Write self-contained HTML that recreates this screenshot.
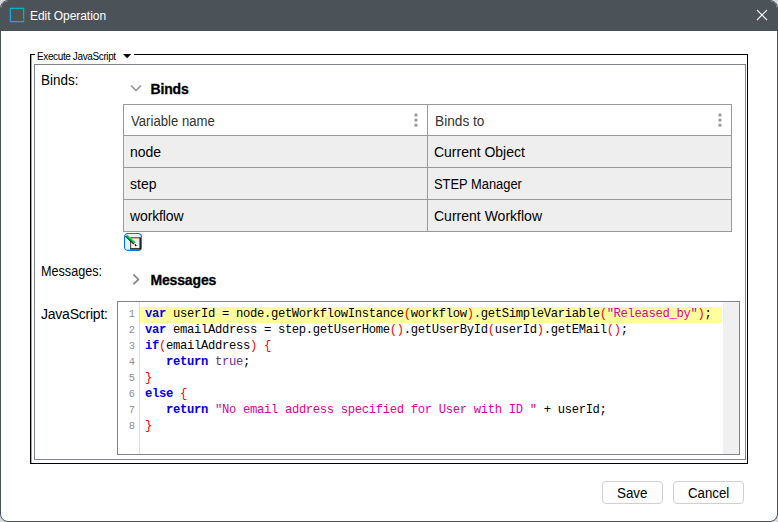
<!DOCTYPE html>
<html><head><meta charset="utf-8"><title>Edit Operation</title>
<style>
*{box-sizing:border-box;margin:0;padding:0}
html,body{width:778px;height:522px;overflow:hidden;background:#d5d8dc;font-family:"Liberation Sans",sans-serif;font-size:14px;color:#000}
.abs{position:absolute}
#win{position:absolute;left:0;top:0;width:778px;height:522px;border-radius:8px;background:#fff;border:1px solid #4b5359;overflow:hidden}
#win>*{margin:-1px 0 0 -1px}
#title{position:absolute;left:0;top:0;width:778px;height:31px;background:#4b5359}
#title .ico{position:absolute;left:10px;top:8px;width:14px;height:14px;border:1px solid #08b2cf;box-shadow:0 0 0 .25px #08b2cf}
.t{position:absolute;white-space:nowrap;line-height:16px;height:16px;transform-origin:0 50%}
#fs{position:absolute;left:30px;top:54px;width:718px;height:410px;border:1px solid #000;box-shadow:inset 1px 0 0 rgba(0,0,0,.35)}
#legend{position:absolute;left:35px;top:50px;height:12px;width:99px;background:#fff}
#inner{position:absolute;left:34px;top:64px;width:712px;height:396px;border:1px solid #7f848c}
.b{font-weight:bold;-webkit-text-stroke:0.3px #000}
table{position:absolute;left:123px;top:104px;border-collapse:collapse;table-layout:fixed;width:609px}
td,th{border:1px solid #999;height:32px;position:relative}
tr:first-child th{height:31px}
td{background:#eee}
th{background:#fff}
.dots{position:absolute;right:8px;top:7px;fill:#9c9c9c}
.dots i{display:block;width:3px;height:3px;border-radius:50%;background:#7a7a7a;margin-bottom:2px}
#code{position:absolute;left:117px;top:301px;width:623px;height:154px;border:1px solid #7f848c;background:#fff;overflow:hidden}
#code>*{margin:-1px 0 0 -1px}
#gsep{position:absolute;left:22px;top:1px;width:1px;height:152px;background:#ddd}
.ln{position:absolute;left:0;margin-top:-2px !important;width:18px;text-align:right;font-family:"Liberation Mono",monospace;font-size:11.8px;line-height:16px;color:#8e8e8e;transform:scaleX(.88);transform-origin:100% 50%}
.cl{position:absolute;left:28px;margin-top:-2px !important;font-family:"Liberation Mono",monospace;font-size:12.2px;letter-spacing:-0.32px;line-height:16px;white-space:pre;color:#000}
.k{color:#0000f0;font-weight:bold}.p{color:#f00}.s{color:#dc00a2}.c{color:#7030a0}
#hl{position:absolute;left:23px;top:6px;width:582px;height:16px;background:#ffff9e}
#sb{position:absolute;left:606px;top:1px;width:16px;height:152px;background:#f0f0f0}
.btn{position:absolute;top:481px;height:23px;border:1px solid #d0d0d0;border-radius:4px;background:#fdfdfd}
/*LS*/
#t_title{letter-spacing:-0.05px}
#t_binds_h{letter-spacing:-0.11px}
#t_r1a{letter-spacing:-0.01px}
#t_r1b{letter-spacing:-0.02px}
#t_r3a{letter-spacing:-0.13px}
#t_r3b{letter-spacing:0.01px}
#t_msg_h{letter-spacing:-0.14px}
#t_js_l{letter-spacing:-0.23px}
#t_h1{transform:scaleX(0.9392)}
#t_h2{transform:scaleX(0.9779)}
#t_r2b{transform:scaleX(0.9209)}
#t_save{transform:scaleX(0.9549)}
#t_binds_l{margin-left:-1.5px !important;transform:scaleX(0.9624)}
#t_r2a{transform:scaleX(1.0000)}
#t_msg_l{transform:scaleX(0.9018)}
#t_cancel{transform:scaleX(0.9475)}
/*ENDLS*/
</style></head><body>
<div id="win">
 <div id="title"><div class="ico"></div><div class="abs" style="left:23px;top:18.6px;width:1px;height:.8px;background:#4b5359"></div>
  <svg class="abs" style="left:755px;top:8px" width="14" height="14" viewBox="0 0 14 14"><path d="M2 2L12 12M12 2L2 12" stroke="#fff" stroke-width="1.1" fill="none"/></svg>
 </div>
 <div class="t" id="t_title" style="left:30px;top:8px;color:#fff;font-size:12px">Edit Operation</div>
 <div id="fs"></div>
 <div id="legend"><svg class="abs" style="left:88px;top:4px" width="9" height="5" viewBox="0 0 9 5"><path d="M-0.2 -0.2H8.4L4.1 4.3Z" fill="#000"/></svg></div>
 <div class="t" id="t_legend" style="left:37px;top:49px;font-size:10px;letter-spacing:-0.38px">Execute JavaScript</div>
 <div id="inner"></div>
 <div class="t" id="t_binds_l" style="left:41px;top:72px">Binds:</div>
 <svg class="abs" style="left:130px;top:85px" width="12" height="8" viewBox="0 0 12 8"><path d="M1.2 0.6L6 5.6L10.8 0.6" stroke="#9a9a9a" stroke-width="1.6" fill="none"/></svg>
 <div class="t b" id="t_binds_h" style="left:150.4px;top:80.5px;font-size:14px">Binds</div>
 <table>
  <tr><th style="width:304px"><svg class="dots" width="6" height="17" viewBox="0 0 6 17"><circle cx="2.95" cy="2.95" r="1.7"/><circle cx="2.95" cy="8.1" r="1.7"/><circle cx="2.95" cy="13.15" r="1.7"/></svg></th><th><svg class="dots" width="6" height="17" viewBox="0 0 6 17"><circle cx="2.95" cy="2.95" r="1.7"/><circle cx="2.95" cy="8.1" r="1.7"/><circle cx="2.95" cy="13.15" r="1.7"/></svg></th></tr>
  <tr><td></td><td></td></tr>
  <tr><td></td><td></td></tr>
  <tr><td></td><td></td></tr>
 </table>
 <div class="t" id="t_h1" style="left:131px;top:113px;color:#333">Variable name</div>
 <div class="t" id="t_h2" style="left:435px;top:113px;color:#333">Binds to</div>
 <div class="t" id="t_r1a" style="left:130px;top:144px">node</div>
 <div class="t" id="t_r1b" style="left:434px;top:144px">Current Object</div>
 <div class="t" id="t_r2a" style="left:130px;top:176px">step</div>
 <div class="t" id="t_r2b" style="left:434px;top:176px">STEP Manager</div>
 <div class="t" id="t_r3a" style="left:130px;top:208px">workflow</div>
 <div class="t" id="t_r3b" style="left:434px;top:208px">Current Workflow</div>
 <svg class="abs" style="left:123px;top:232px" width="20" height="20" viewBox="0 0 20 20">
  <defs><linearGradient id="g1" x1="1" y1="0" x2="0" y2="1"><stop offset="0" stop-color="#e4e4e4"/><stop offset="1" stop-color="#fbfbfb"/></linearGradient></defs>
  <rect x="1.55" y="1.5" width="16.8" height="16.9" rx="3.2" fill="#e5f1fb" stroke="#0078d7" stroke-width="1.1"/>
  <rect x="7.7" y="5.8" width="9.6" height="11.2" fill="url(#g1)"/><path d="M7.7 17V5.8H17.3" stroke="#3c3c3c" stroke-width="1" fill="none"/>
  <path d="M17.2 5.4V16.9H7.3" stroke="#000" stroke-width="1.3" fill="none"/>
  <path d="M2.5 4.1L10.9 12.1" stroke="#111" stroke-width="1.2"/>
  <path d="M3.6 3.6L11.9 11" stroke="#00b23a" stroke-width="2"/>
  <path d="M4.2 3.6L12.2 10.7" stroke="#4fe285" stroke-width="0.7"/>
  <path d="M10.7 12L12.7 10.4L13.2 12.4L11.9 13.3Z" fill="#fff"/>
  <path d="M11.9 12.4L13.2 14" stroke="#000" stroke-width="1.2"/>
 </svg>
 <div class="t" id="t_msg_l" style="left:41px;top:263px">Messages:</div>
 <svg class="abs" style="left:132px;top:274px" width="8" height="12" viewBox="0 0 8 12"><path d="M1.3 0.4L6.4 5.4L1.3 10.4" stroke="#858585" stroke-width="1.7" fill="none"/></svg>
 <div class="t b" id="t_msg_h" style="left:150.4px;top:271.5px;font-size:14px">Messages</div>
 <div class="t" id="t_js_l" style="left:41px;top:306px">JavaScript:</div>
 <div id="code">
  <div id="gsep"></div><div id="hl"></div><div id="sb"></div>
  <div class="ln" style="top:6px">1</div><div class="ln" style="top:22px">2</div><div class="ln" style="top:38px">3</div><div class="ln" style="top:54px">4</div><div class="ln" style="top:70px">5</div><div class="ln" style="top:86px">6</div><div class="ln" style="top:102px">7</div><div class="ln" style="top:118px">8</div>
  <div class="cl" style="top:6px"><span class="k">var</span> userId = node.getWorkflowInstance<span class="p">(</span>workflow<span class="p">)</span>.getSimpleVariable<span class="p">(</span><span class="s">"Released_by"</span><span class="p">)</span>;</div>
  <div class="cl" style="top:22px"><span class="k">var</span> emailAddress = step.getUserHome<span class="p">()</span>.getUserById<span class="p">(</span>userId<span class="p">)</span>.getEMail<span class="p">()</span>;</div>
  <div class="cl" style="top:38px"><span class="k">if</span><span class="p">(</span>emailAddress<span class="p">)</span> <span class="p">{</span></div>
  <div class="cl" style="top:54px">   <span class="k">return</span> <span class="c">true</span>;</div>
  <div class="cl" style="top:70px"><span class="p">}</span></div>
  <div class="cl" style="top:86px"><span class="k">else</span> <span class="p">{</span></div>
  <div class="cl" style="top:102px">   <span class="k">return</span> <span class="s">"No email address specified for User with ID "</span> + userId;</div>
  <div class="cl" style="top:118px"><span class="p">}</span></div>
 </div>
 <div class="btn" style="left:602px;width:61px"></div>
 <div class="btn" style="left:673px;width:71px"></div>
 <div class="t" id="t_save" style="left:617px;top:485px">Save</div>
 <div class="t" id="t_cancel" style="left:688px;top:485px">Cancel</div>
</div>
</body></html>
